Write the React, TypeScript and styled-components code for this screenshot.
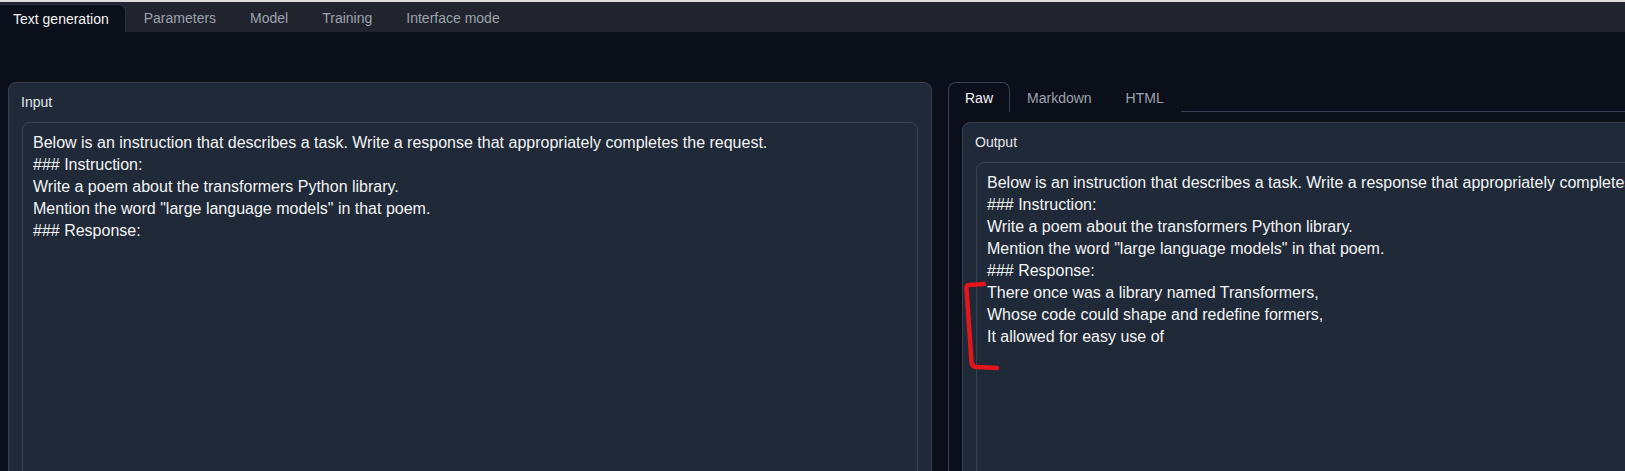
import React from "react";
import styled, { createGlobalStyle } from "styled-components";

const GlobalStyle = createGlobalStyle`
  html, body {
    margin: 0;
    padding: 0;
    background: #0b0f19;
    overflow: hidden;
    font-family: "Liberation Sans", Arial, sans-serif;
  }
  * { box-sizing: border-box; }
`;

const Page = styled.div`
  width: 1880px;
  height: 471px;
  overflow: hidden;
  background: #0b0f19;
  display: flex;
  flex-direction: column;
`;

const TopStrip = styled.div`
  height: 2px;
  flex: none;
  background: #dcdcdc;
`;

const TopTabBar = styled.div`
  height: 30px;
  flex: none;
  background: #21242c;
  display: flex;
  align-items: flex-end;
`;

const TopTab = styled.div<{ $active?: boolean; $first?: boolean }>`
  height: 28px;
  display: flex;
  align-items: center;
  padding: 0 16px 0 ${(p) => (p.$first ? "13px" : "18px")};
  font-size: 14px;
  color: ${(p) => (p.$active ? "#f3f4f6" : "#9ca3af")};
  background: ${(p) => (p.$active ? "#0b0f19" : "transparent")};
  border-top-right-radius: ${(p) => (p.$active ? "7px" : "0")};
  border-right: ${(p) => (p.$active ? "1px solid #2b3140" : "none")};
  border-top: ${(p) => (p.$active ? "1px solid #2b3140" : "none")};
`;

const Main = styled.div`
  padding: 50px 0 0 8px;
  display: grid;
  grid-template-columns: 924px 924px;
  column-gap: 16px;
`;

const Column = styled.div`
  display: flex;
  flex-direction: column;
  min-width: 0;
`;

const Block = styled.div`
  background: #1f2937;
  border: 1px solid #374151;
  border-radius: 8px;
  padding: 9px 13px 0 13px;
  display: flex;
  flex-direction: column;
  gap: 10px;
`;

const Label = styled.div`
  font-size: 14px;
  line-height: 20px;
  color: #e5e7eb;
  margin-left: -1px;
`;

const AreaWrap = styled.div`
  position: relative;
`;

const TextArea = styled.textarea`
  display: block;
  width: 100%;
  height: 420px;
  resize: none;
  background: #1f2937;
  border: 1px solid #374151;
  border-radius: 8px;
  padding: 9px 10px;
  font-family: "Liberation Sans", Arial, sans-serif;
  font-size: 16px;
  line-height: 22px;
  color: #f3f4f6;
  outline: none;
  overflow: hidden;
  white-space: pre;
`;

const OutTabRow = styled.div`
  height: 30px;
  display: flex;
  border-bottom: 1px solid #374151;
`;

const OutTab = styled.div<{ $active?: boolean }>`
  height: 30px;
  display: flex;
  align-items: center;
  padding: 0 16px;
  font-size: 14px;
  color: ${(p) => (p.$active ? "#f3f4f6" : "#9ca3af")};
  background: #0b0f19;
  border: 1px solid ${(p) => (p.$active ? "#374151" : "transparent")};
  border-bottom: none;
  border-radius: 8px 8px 0 0;
  margin-bottom: -1px;
  position: relative;
`;

const TabPanel = styled.div`
  border: 1px solid #374151;
  border-top: none;
  padding: 10px 13px 0 13px;
`;

const Bracket = styled.svg`
  position: absolute;
  left: -16px;
  top: 115px;
  width: 45px;
  height: 98px;
  pointer-events: none;
`;

const prompt =
  "Below is an instruction that describes a task. Write a response that appropriately completes the request.\n### Instruction:\nWrite a poem about the transformers Python library.\nMention the word \"large language models\" in that poem.\n### Response:";

const output =
  prompt +
  "\nThere once was a library named Transformers,\nWhose code could shape and redefine formers,\nIt allowed for easy use of";

export default function App() {
  return (
    <>
      <GlobalStyle />
      <Page>
        <TopStrip />
        <TopTabBar>
          <TopTab $active $first>Text generation</TopTab>
          <TopTab>Parameters</TopTab>
          <TopTab>Model</TopTab>
          <TopTab>Training</TopTab>
          <TopTab>Interface mode</TopTab>
        </TopTabBar>
        <Main>
          <Column>
            <Block>
              <Label>Input</Label>
              <AreaWrap>
                <TextArea readOnly value={prompt} />
              </AreaWrap>
            </Block>
          </Column>
          <Column>
            <OutTabRow>
              <OutTab $active>Raw</OutTab>
              <OutTab>Markdown</OutTab>
              <OutTab>HTML</OutTab>
            </OutTabRow>
            <TabPanel>
              <Block>
                <Label>Output</Label>
                <AreaWrap>
                  <TextArea readOnly value={output} />
                  <Bracket viewBox="0 0 45 98">
                    <path
                      d="M24 7 L9 8 Q6 8 6.5 12 L11.5 85 Q12 90 17 90 L37 91"
                      fill="none"
                      stroke="#e3161b"
                      strokeWidth="4.5"
                      strokeLinecap="round"
                      strokeLinejoin="round"
                    />
                  </Bracket>
                </AreaWrap>
              </Block>
            </TabPanel>
          </Column>
        </Main>
      </Page>
    </>
  );
}
